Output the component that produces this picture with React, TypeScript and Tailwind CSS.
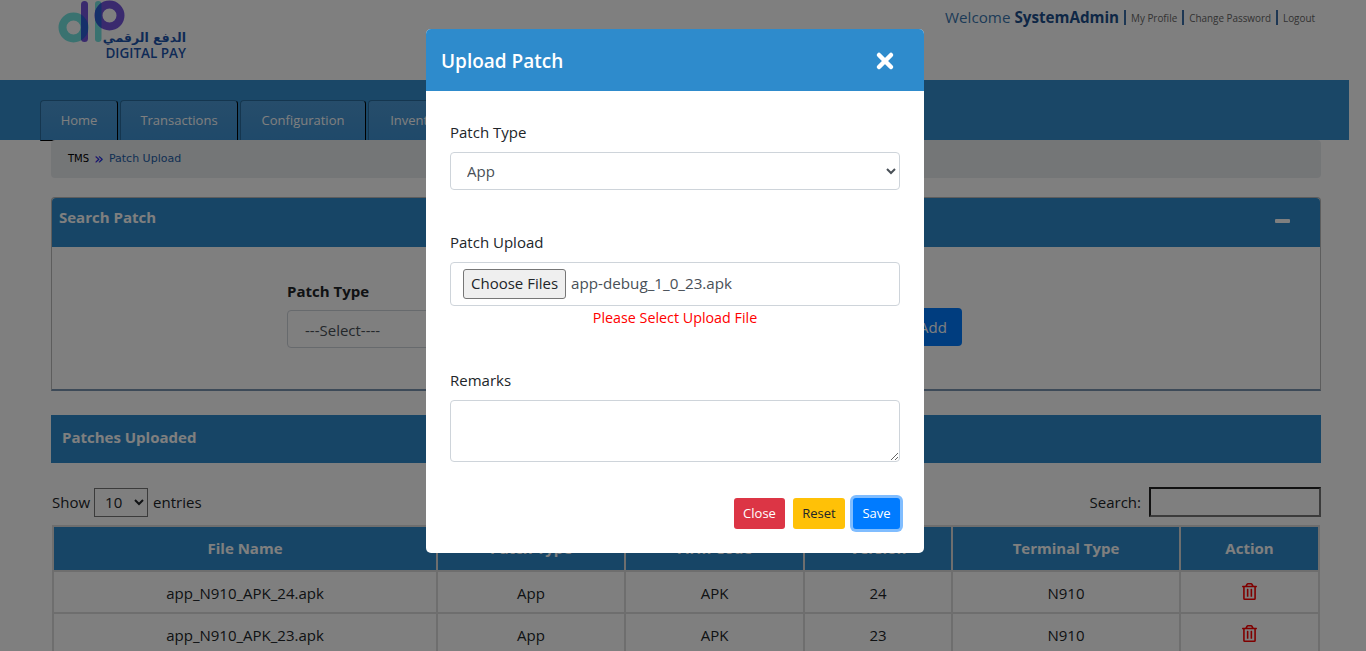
import React from 'react';
import { X } from 'lucide-react';
import { FaRegTrashAlt } from 'react-icons/fa';

const font = "font-['Open_Sans','Noto_Sans',sans-serif]";

const navItems = [
  { label: 'Home', width: 'w-[78px]' },
  { label: 'Transactions', width: 'w-[118px]' },
  { label: 'Configuration', width: 'w-[126px]' },
  { label: 'Inventory', width: 'w-[102px]' },
];

const rows = [
  { file: 'app_N910_APK_24.apk', version: '24' },
  { file: 'app_N910_APK_23.apk', version: '23' },
];

const Logo = () => (
  <div className="relative w-[130px] h-[60px]">
    <svg width="70" height="44" viewBox="0 0 70 44" className="absolute left-0 top-0">
      <defs>
        <clipPath id="dStem"><rect x="24" y="1" width="7" height="41" rx="3.5" /></clipPath>
        <clipPath id="pStem"><rect x="38" y="1" width="6.5" height="41" rx="3.2" /></clipPath>
      </defs>
      <circle cx="16.5" cy="27.5" r="11" fill="none" stroke="#74e4e0" strokeWidth="8" />
      <rect x="24" y="1" width="7" height="41" rx="3.5" fill="#7454dc" />
      <rect x="38" y="1" width="6.5" height="41" rx="3.2" fill="#74e4e0" />
      <circle cx="52.5" cy="15.5" r="11" fill="none" stroke="#7454dc" strokeWidth="8" />
      <circle cx="16.5" cy="27.5" r="11" fill="none" stroke="#2c60d4" strokeWidth="8" clipPath="url(#dStem)" />
      <circle cx="52.5" cy="15.5" r="11" fill="none" stroke="#2c60d4" strokeWidth="8" clipPath="url(#pStem)" />
    </svg>
    <div className="absolute right-[1px] top-[31px] text-[12.5px] leading-[14px] font-bold text-[#1d55ad] font-['DejaVu_Sans',sans-serif]" dir="rtl">
      الدفع الرقمي
    </div>
    <div className="absolute right-[1px] top-[46px] text-[13.5px] leading-[14px] font-semibold text-[#1d55ad]">
      DIGITAL PAY
    </div>
  </div>
);

const Field = ({ label, children }: { label: string; children: React.ReactNode }) => (
  <div>
    <label className="block text-[15px] leading-[24px] text-[#212529]">{label}</label>
    <div className="mt-[8px]">{children}</div>
  </div>
);

const Divider = () => <span className="mx-[5px] mt-[3px] h-[15px] border-l-2 border-[#3a6ea8]" />;

export default function App() {
  return (
    <div className={`relative h-[651px] overflow-hidden bg-white ${font}`}>
      {/* page behind the dialog */}
      <header className="h-[80px] flex justify-between pl-[57px] pr-[51px]">
        <Logo />
        <div className="flex items-start pt-[7px] text-[#3a77b0]">
          <span className="text-[15.2px] leading-[20px]">
            Welcome <b className="text-[#1d4f8c]">SystemAdmin</b>
          </span>
          <Divider />
          <a className="text-[9.9px] leading-[22px] text-[#666]">My Profile</a>
          <Divider />
          <a className="text-[9.9px] leading-[22px] text-[#666]">Change Password</a>
          <Divider />
          <a className="text-[9.9px] leading-[22px] text-[#666]">Logout</a>
        </div>
      </header>

      <nav className="h-[60px] w-[1349px] bg-[#348ecf] flex items-start pt-[20px] pl-[40px] gap-[2px]">
        {navItems.map((item) => (
          <div
            key={item.label}
            className={`${item.width} h-[41px] shrink-0 rounded-t-[4px] border border-[#2a6d9e] border-r-black border-b-black bg-linear-to-b from-[#4d9ad6] to-[#3f93d4] text-center text-[13px] leading-[38px] text-white`}
          >
            {item.label}
          </div>
        ))}
      </nav>

      <div className="relative ml-[51px] w-[1270px] h-[38px] bg-[#e9ecef] rounded-[4px] pl-[17px] flex items-center text-[10px] gap-[5px] font-['DejaVu_Sans',sans-serif]">
        <span className="text-black -mt-[1px]">TMS</span>
        <span className="text-[#2222dd] text-[16px] leading-none -mt-[1px]">»</span>
        <span className="text-[#1e5fa8] text-[11px] mt-[1px]">Patch Upload</span>
      </div>

      <section className="ml-[51px] w-[1270px] mt-[19px] h-[194px] border border-[#bbb] border-b-2 border-b-[#7a94b0] rounded-t-[4px]">
        <div className="h-[49px] bg-[#2e8bcc] flex items-start justify-between pl-[7px] pr-[30px] pt-[7px] rounded-t-[4px]">
          <h2 className="text-[15px] leading-[24px] font-bold text-white">Search Patch</h2>
          <span className="w-[15px] h-[4px] mt-[14px] bg-white rounded-[1px]" />
        </div>
        <div className="flex">
          <div className="ml-[235px] mt-[32px]">
            <div className="text-[15px] font-bold leading-[24px] text-[#212529]">Patch Type</div>
            <div className="mt-[7px] w-[200px] h-[38px] border border-[#ced4da] rounded-[4px] pl-[17px] text-[15px] leading-[38px] text-[#495057]">
              ---Select----
            </div>
          </div>
          <button className="ml-[417px] mt-[61px] h-[38px] w-[58px] rounded-[4px] bg-[#007bff] text-white text-[15px]">
            Add
          </button>
        </div>
      </section>

      <div className="ml-[51px] w-[1270px] mt-[24px] h-[48px] bg-[#2e8bcc] flex items-center pl-[11px] pb-[4px]">
        <h2 className="text-[15px] font-bold text-white">Patches Uploaded</h2>
      </div>

      <div className="ml-[51px] w-[1270px] mt-[24px] h-[30px] flex items-center justify-between text-[15px] text-[#212529]">
        <div className="flex items-center gap-[4px] pl-[1px]">
          Show
          <select className="h-[29px] w-[54px] border border-[#767676] pl-[6px] text-[15px]" defaultValue="10">
            <option>10</option>
          </select>
          <span className="ml-[1px]">entries</span>
        </div>
        <div className="flex items-center gap-[8px]">
          Search:
          <div className="w-[172px] h-[30px] border-2 border-[#222] border-r-[#777] border-b-[#777]" />
        </div>
      </div>

      <table className="ml-[52px] mt-[8px] w-[1268px] table-fixed border-collapse border-2 border-[#ddd] text-[15px] text-[#212529]">
        <thead>
          <tr className="h-[45px] bg-[#2e8bcc] text-white font-bold">
            <th className="w-[384px] border-2 border-[#ddd]">File Name</th>
            <th className="w-[188px] border-2 border-[#ddd]">Patch Type</th>
            <th className="w-[179px] border-2 border-[#ddd]">Firm Code</th>
            <th className="w-[148px] border-2 border-[#ddd]">Version</th>
            <th className="w-[228px] border-2 border-[#ddd]">Terminal Type</th>
            <th className="border-2 border-[#ddd]">Action</th>
          </tr>
        </thead>
        <tbody>
          {rows.map((row) => (
            <tr key={row.file} className="h-[42px] text-center">
              <td className="border-2 border-[#ddd] pt-[2px]">{row.file}</td>
              <td className="border-2 border-[#ddd] pt-[2px]">App</td>
              <td className="border-2 border-[#ddd] pt-[2px]">APK</td>
              <td className="border-2 border-[#ddd] pt-[2px]">{row.version}</td>
              <td className="border-2 border-[#ddd] pt-[2px]">N910</td>
              <td className="border-2 border-[#ddd] pt-[2px]"><FaRegTrashAlt className="mx-auto -mt-[3px] text-[#ff0000]" size={17} /></td>
            </tr>
          ))}
        </tbody>
      </table>

      {/* backdrop */}
      <div className="absolute inset-0 bg-black/50" />

      {/* dialog */}
      <div className="absolute left-[426px] top-[29px] w-[498px] h-[524px] bg-white rounded-[5px] overflow-hidden">
        <div className="h-[62px] bg-[#2e8bcc] flex items-center justify-between pl-[15px] pr-[27px] pt-[2px]">
          <h2 className="text-[19px] font-semibold text-white">Upload Patch</h2>
          <X size={24} strokeWidth={4.5} className="text-white" />
        </div>
        <div className="px-[24px] pt-[29px]">
          <Field label="Patch Type">
            <select className="w-full h-[38px] border border-[#ced4da] rounded-[4px] pl-[12px] text-[15px] text-[#495057] bg-white" defaultValue="App">
              <option>App</option>
            </select>
          </Field>
          <div className="mt-[40px]">
            <Field label="Patch Upload">
              <div className="h-[44px] border border-[#ced4da] rounded-[4px] flex items-center pl-[12px] text-[15.2px] text-[#495057]">
                <span className="h-[30px] px-[7px] text-[15px] leading-[26px] border border-[#767676] rounded-[3px] bg-[#efefef] text-[#212529]">
                  Choose Files
                </span>
                <span className="ml-[5px] -mt-[1px]">app-debug_1_0_23.apk</span>
              </div>
            </Field>
            <p className="text-center text-[14.3px] leading-[24px] text-[#ff0000]">Please Select Upload File</p>
          </div>
          <div className="mt-[38px]">
            <Field label="Remarks">
              <textarea className="block w-full h-[62px] border border-[#ced4da] rounded-[4px]" />
            </Field>
          </div>
          <div className="mt-[36px] flex justify-end gap-[8px]">
            <button className="h-[31px] w-[51px] rounded-[3px] bg-[#dc3545] text-white text-[13px]">Close</button>
            <button className="h-[31px] w-[52px] rounded-[3px] bg-[#ffc107] text-[#212529] text-[13px]">Reset</button>
            <button className="h-[31px] w-[47px] rounded-[3px] bg-[#007bff] text-white text-[13px] ring-[3px] ring-[#80bdff]">Save</button>
          </div>
        </div>
      </div>
    </div>
  );
}
